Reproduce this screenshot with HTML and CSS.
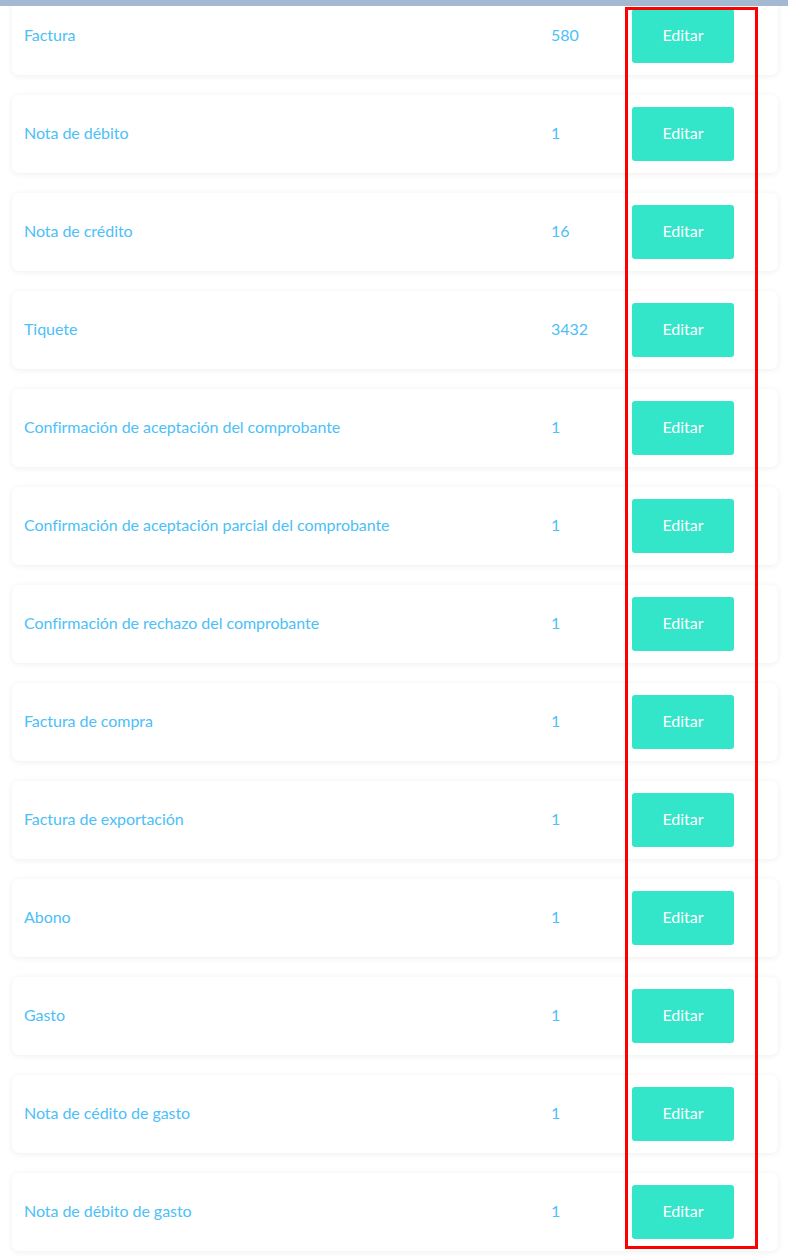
FILE: index.html
```html
<!DOCTYPE html>
<html lang="es">
<head>
<meta charset="utf-8">
<title>Consecutivos</title>
<link rel="stylesheet" href="styles.css">
</head>
<body>
<div class="topbar"></div>
<main class="list">
  <div class="card"><span class="label">Factura</span><span class="num">580</span><button class="btn">Editar</button></div>
  <div class="card"><span class="label">Nota de débito</span><span class="num">1</span><button class="btn">Editar</button></div>
  <div class="card"><span class="label">Nota de crédito</span><span class="num">16</span><button class="btn">Editar</button></div>
  <div class="card"><span class="label">Tiquete</span><span class="num">3432</span><button class="btn">Editar</button></div>
  <div class="card"><span class="label">Confirmación de aceptación del comprobante</span><span class="num">1</span><button class="btn">Editar</button></div>
  <div class="card"><span class="label">Confirmación de aceptación parcial del comprobante</span><span class="num">1</span><button class="btn">Editar</button></div>
  <div class="card"><span class="label">Confirmación de rechazo del comprobante</span><span class="num">1</span><button class="btn">Editar</button></div>
  <div class="card"><span class="label">Factura de compra</span><span class="num">1</span><button class="btn">Editar</button></div>
  <div class="card"><span class="label">Factura de exportación</span><span class="num">1</span><button class="btn">Editar</button></div>
  <div class="card"><span class="label">Abono</span><span class="num">1</span><button class="btn">Editar</button></div>
  <div class="card"><span class="label">Gasto</span><span class="num">1</span><button class="btn">Editar</button></div>
  <div class="card"><span class="label">Nota de cédito de gasto</span><span class="num">1</span><button class="btn">Editar</button></div>
  <div class="card"><span class="label">Nota de débito de gasto</span><span class="num">1</span><button class="btn">Editar</button></div>
</main>
<div class="highlight"></div>
</body>
</html>
```

FILE: styles.css
```css
* { box-sizing: border-box; }
html, body { margin: 0; padding: 0; background: #ffffff; }
body {
  font-family: Lato, "Open Sans", sans-serif;
  font-size: 16px;
  overflow: hidden;
  height: 1260px;
}
.topbar {
  position: fixed;
  top: 0; left: 0; right: 0;
  height: 6px;
  background: #a3b8d1;
  z-index: 2;
}
.list {
  display: flex;
  flex-direction: column;
  gap: 20px;
  margin: -3px 10px 0 12px;
}
.card {
  display: grid;
  grid-template-columns: 1fr 81px 102px;
  align-items: center;
  height: 78px;
  padding: 0 44px 0 12px;
  background: #ffffff;
  border-radius: 7px;
  box-shadow: 0 1px 6px rgba(0, 0, 0, 0.07);
}
.label, .num {
  color: #4cc0f8;
  font-size: 16px;
  letter-spacing: -0.05px;
  padding-bottom: 3px;
}
.btn {
  height: 54px;
  border: none;
  border-radius: 3px;
  background: #33e5c9;
  color: #ffffff;
  font-family: Lato, "Open Sans", sans-serif;
  font-size: 16px;
  padding: 0 0 3px 0;
}
.highlight {
  position: absolute;
  left: 625px;
  top: 7px;
  width: 133px;
  height: 1242px;
  border: 3px solid #ff0000;
  z-index: 3;
}
```
